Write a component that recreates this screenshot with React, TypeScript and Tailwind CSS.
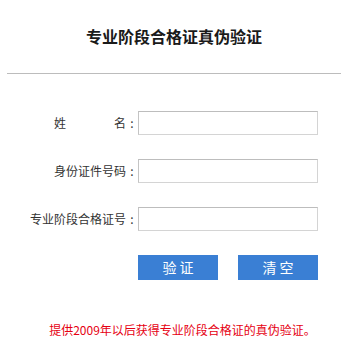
import React from 'react';

const font = { fontFamily: '"Microsoft YaHei", "Noto Sans CJK SC", sans-serif' };

const Field: React.FC<{ label: string }> = ({ label }) => (
  <div className="flex items-center h-[24px]">
    <label className="w-[138px] text-right text-[12px] text-[#333] whitespace-pre leading-[24px]">
      {label}
      <span className="inline-block w-[12px] text-center">:</span>
    </label>
    <input
      type="text"
      className="w-[180px] h-[24px] border border-[#d4d4d4] border-t-[#bdbdbd] border-l-[#c4c4c4] bg-white outline-none px-1 text-[12px]"
    />
  </div>
);

export default function App() {
  return (
    <div className="w-[360px] h-[357px] bg-white" style={font}>
      <div className="mx-[7px] w-[334px] pt-[26px] pb-[27px] border-b border-[#bcbcbc]">
        <h1 className="text-center text-[16px] leading-[20px] font-bold text-[#1a1a1a]">专业阶段合格证真伪验证</h1>
      </div>
      <div className="mt-[37px] flex flex-col gap-[24px]">
        <Field label={'姓　　　　名'} />
        <Field label="身份证件号码" />
        <Field label="专业阶段合格证号" />
      </div>
      <div className="mt-[24px] flex pl-[138px] gap-[20px]">
        <button className="w-[80px] h-[25px] bg-[#3a7fd4] text-white text-[14px] leading-[25px]">验 证</button>
        <button className="w-[80px] h-[25px] bg-[#3a7fd4] text-white text-[14px] leading-[25px]">清 空</button>
      </div>
      <p className="mt-[42px] text-center pl-[5px] text-[12px] leading-[16px] text-[#e60012]">
        提供2009年以后获得专业阶段合格证的真伪验证。
      </p>
    </div>
  );
}
